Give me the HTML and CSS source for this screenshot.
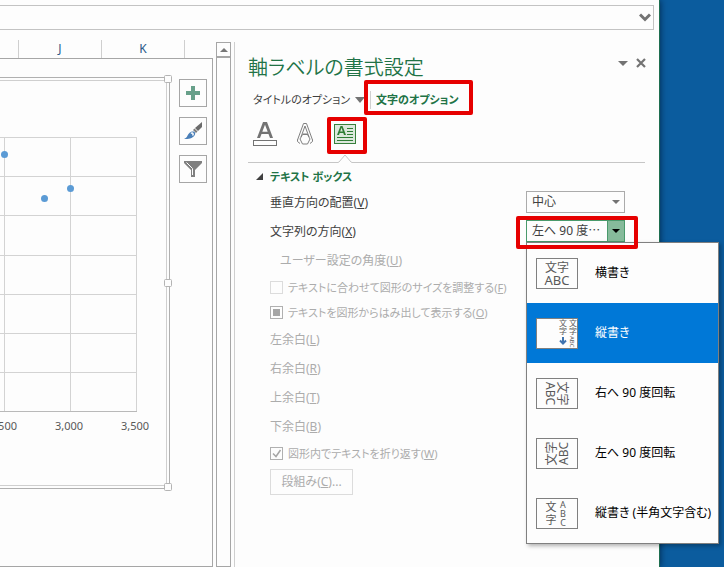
FILE: index.html
```html
<!DOCTYPE html>
<html lang="ja">
    <head>
        <meta charset="UTF-8">
        <title>軸ラベルの書式設定</title>
        <link rel="stylesheet" href="styles.css">
    </head>
    <body>
        <div class="window">
            <div class="formula-bar">
                <svg width="12" height="9" viewBox="0 0 12 9"><path d="M1 1.5 L6 6.5 L11 1.5" fill="none" stroke="#737373" stroke-width="3"/></svg>
            </div>
            <div class="main">
                <div class="sheet">
                    <div class="columns">
                        <span class="col first"></span>
                        <span class="col">J</span>
                        <span class="col">K</span>
                        <span class="col last"></span>
                    </div>
                    <div class="cells">
                        <svg class="chart" width="173" height="417" viewBox="0 75 173 417">
                            <g fill="none" shape-rendering="crispEdges">
                                <path d="M0 77.5H169.500V488.500H0" stroke="#b0b0b0"/>
                                <path d="M0 80.5H166.500V485.500H0" stroke="#cfcfcf"/>
                                <path d="M0 137.500H137M0 176.500H137M0 215.500H137M0 255.500H137M0 294.500H137M0 333.500H137M0 372.500H137M4.500 137V411M70.500 137V411M136.500 137V411" stroke="#d3d3d3"/>
                                <path d="M0 411.500H137" stroke="#b9b9b9"/>
                            </g>
                            <g fill="#fdfdfd" stroke="#b4b4b4">
                                <rect x="164.500" y="75.500" width="7" height="7" rx="1"/>
                                <rect x="164.500" y="279.500" width="7" height="7" rx="1"/>
                                <rect x="164.500" y="483.500" width="7" height="7" rx="1"/>
                            </g>
                            <g fill="#5b9bd5">
                                <circle cx="4.500" cy="154.500" r="3.500"/>
                                <circle cx="44.500" cy="198.500" r="3.500"/>
                                <circle cx="70.500" cy="188.500" r="3.500"/>
                            </g>
                            <g class="axis">
                                <text x="17" y="430" text-anchor="end">2,500</text>
                                <text x="69" y="430" text-anchor="middle">3,000</text>
                                <text x="135" y="430" text-anchor="middle">3,500</text>
                            </g>
                        </svg>
                        <div class="chart-tools">
                            <button type="button" aria-label="グラフ要素">
                                <svg width="14" height="14" viewBox="0 0 14 14"><path d="M5 0h4v5h5v4H9v5H5V9H0V5h5z" fill="#68a08a"/></svg>
                            </button>
                            <button type="button" aria-label="グラフ スタイル">
                                <svg width="18" height="18" viewBox="0 0 18 18">
                                    <path d="M18 0v5l-4 4-3-3z" fill="#6b6b6b"/>
                                    <path d="M10.500 6.500l3 3-1.500 1.500-3-3z" fill="#7c7c7c"/>
                                    <path d="M9 9.500c2 0 3 2 1.500 4-2 3-6 3.500-10.500 3.500 3-1 3-3 4.500-5 1.500-2 3-2.500 4.500-2.500z" fill="#4a7fb8"/>
                                    <path d="M7 11.500c1.500-1.500 3 .5 1.500 2" fill="none" stroke="#fdfdfd" stroke-width="1.500"/>
                                </svg>
                            </button>
                            <button type="button" aria-label="グラフ フィルター">
                                <svg width="18" height="16" viewBox="0 0 18 16">
                                    <path d="M0 0h18v2l-7 7v7H7V9L0 2z" fill="#808080"/>
                                    <path d="M2.500 1.500l6 6V14" fill="none" stroke="#fdfdfd"/>
                                </svg>
                            </button>
                        </div>
                    </div>
                </div>
                <div class="scrollbar">
                    <button type="button" aria-label="上へ">
                        <svg width="8" height="4" viewBox="0 0 8 4"><path d="M0 4L4 0l4 4z" fill="#777"/></svg>
                    </button>
                </div>
                <div class="pane">
                    <div class="pane-head">
                        <h1>軸ラベルの書式設定</h1>
                        <button type="button" aria-label="作業ウィンドウ オプション">
                            <svg width="10" height="5" viewBox="0 0 10 5"><path d="M0 0h10L5 5z" fill="#737373"/></svg>
                        </button>
                        <button type="button" aria-label="閉じる">
                            <svg width="10" height="10" viewBox="0 0 10 10"><path d="M1 1l8 8M9 1L1 9" stroke="#737373" stroke-width="2.200"/></svg>
                        </button>
                    </div>
                    <div class="tabs">
                        <button type="button" class="tab title-tab">タイトルのオプション
                            <svg width="10" height="6" viewBox="0 0 10 6"><path d="M0 0h10L5 6z" fill="#737373"/></svg>
                        </button>
                        <button type="button" class="tab text-tab">文字のオプション<span class="mark"></span></button>
                    </div>
                    <div class="icons">
                        <button type="button" aria-label="文字の塗りつぶしと輪郭">
                            <svg width="24" height="24" viewBox="0 0 24 24">
                                <path d="M4 16L10 0h4L20 16h-3l-1.500-4h-7L7 16zM9.300 9.700h5.400L12 2.800z" fill="#737373" fill-rule="evenodd"/>
                                <rect x=".5" y="18.500" width="23" height="5" fill="none" stroke="#737373"/>
                            </svg>
                        </button>
                        <button type="button" aria-label="文字の効果">
                            <svg width="18" height="24" viewBox="0 0 18 24" fill="none" stroke="#808080">
                                <path d="M1.500 18L7.500 1.500h3L16.500 18M5 15L9 4l4 11M7 12h4l2 2M4 21.500l-2.500-2v-2M14 21.500l2.500-2v-2"/>
                                <path d="M6.500 12.500h5L14 17l-2.500 5h-5L4 17z"/>
                            </svg>
                        </button>
                        <button type="button" class="current" aria-label="テキスト ボックス">
                            <svg width="22" height="20" viewBox="0 0 22 20">
                                <rect x=".5" y=".5" width="21" height="19" fill="#dce8dd" stroke="#38803c"/>
                                <path d="M3 11L6.500 2h2L12 11h-2l-.7-2H5.700L5 11zM6.200 7.400h2.600L7.500 3.800z" fill="#2f7d35" fill-rule="evenodd"/>
                                <path d="M13 4.500h6M13 7.500h6M13 10.500h6M3 13.500h16M3 16.500h16" stroke="#2f7d35"/>
                            </svg>
                            <span class="mark"></span>
                        </button>
                    </div>
                    <div class="divider">
                        <span class="before"></span>
                        <svg width="14" height="9" viewBox="0 0 14 9"><path d="M0 8.500L1 8 7 1l6 7 1 .5" fill="none" stroke="#c6c6c6"/></svg>
                        <span class="after"></span>
                    </div>
                    <h2><svg width="7" height="7" viewBox="0 0 7 7"><path d="M7 0v7H0z" fill="#404040"/></svg>テキスト ボックス</h2>
                    <form class="options">
                        <div class="row">
                            <label for="valign">垂直方向の配置(<u>V</u>)</label>
                            <span class="combo">
                                <select id="valign"><option>中心</option></select>
                                <svg width="8" height="4" viewBox="0 0 8 4"><path d="M0 0h8L4 4z" fill="#737373"/></svg>
                            </span>
                        </div>
                        <div class="row">
                            <label for="direction">文字列の方向(<u>X</u>)</label>
                            <span class="combo open">
                                <select id="direction"><option>左へ 90 度⋯</option></select>
                                <svg width="8" height="4" viewBox="0 0 8 4"><path d="M0 0h8L4 4z" fill="#000"/></svg>
                                <span class="mark"></span>
                                <span class="menu">
                                    <button type="button">
                                        <svg class="thumb" width="42" height="31" viewBox="0 0 42 31">
                                            <text x="21" y="14" font-size="12" text-anchor="middle">文字</text>
                                            <text x="21" y="27" font-size="13" text-anchor="middle">ABC</text>
                                        </svg>横書き
                                    </button>
                                    <button type="button" class="selected">
                                        <svg class="thumb" width="42" height="31" viewBox="0 0 42 31">
                                            <g font-size="8" text-anchor="middle">
                                                <text x="27" y="8">文</text><text x="27" y="16">字</text>
                                                <text x="37" y="8">文</text><text x="37" y="16">字</text>
                                            </g>
                                            <text transform="translate(34 18) rotate(90)" font-size="6">ABC</text>
                                            <path d="M27 19v6M24 22.500l3 3 3-3" fill="none" stroke="#3f74b0" stroke-width="2"/>
                                        </svg>縦書き
                                    </button>
                                    <button type="button">
                                        <svg class="thumb" width="42" height="31" viewBox="0 0 42 31">
                                            <g transform="translate(21 15.500) rotate(90)" text-anchor="middle">
                                                <text y="-1" font-size="12">文字</text>
                                                <text y="11" font-size="12">ABC</text>
                                            </g>
                                        </svg>右へ 90 度回転
                                    </button>
                                    <button type="button">
                                        <svg class="thumb" width="42" height="31" viewBox="0 0 42 31">
                                            <g transform="translate(21 15.500) rotate(-90)" text-anchor="middle">
                                                <text y="-1" font-size="12">文字</text>
                                                <text y="11" font-size="12">ABC</text>
                                            </g>
                                        </svg>左へ 90 度回転
                                    </button>
                                    <button type="button">
                                        <svg class="thumb" width="42" height="31" viewBox="0 0 42 31">
                                            <g font-size="11" text-anchor="middle"><text x="15" y="13">文</text><text x="15" y="26">字</text></g>
                                            <g font-size="9" text-anchor="middle"><text x="27" y="10">A</text><text x="27" y="19">B</text><text x="27" y="28">C</text></g>
                                        </svg>縦書き (半角文字含む)
                                    </button>
                                </span>
                            </span>
                        </div>
                        <div class="row off indent">
                            <label for="angle">ユーザー設定の角度(<u>U</u>)</label><input type="text" id="angle" disabled>
                        </div>
                        <div class="row off check">
                            <input type="checkbox" class="faint" id="fit" disabled><label for="fit">テキストに合わせて図形のサイズを調整する(<u>F</u>)</label>
                        </div>
                        <div class="row off check">
                            <input type="checkbox" class="mixed" id="overflow" disabled><label for="overflow">テキストを図形からはみ出して表示する(<u>O</u>)</label>
                        </div>
                        <div class="row off">
                            <label for="left">左余白(<u>L</u>)</label><input type="text" id="left" disabled>
                        </div>
                        <div class="row off">
                            <label for="right">右余白(<u>R</u>)</label><input type="text" id="right" disabled>
                        </div>
                        <div class="row off">
                            <label for="top">上余白(<u>T</u>)</label><input type="text" id="top" disabled>
                        </div>
                        <div class="row off">
                            <label for="bottom">下余白(<u>B</u>)</label><input type="text" id="bottom" disabled>
                        </div>
                        <div class="row off check">
                            <span class="tick">
                                <input type="checkbox" id="wrap" checked disabled>
                                <svg width="13" height="13" viewBox="0 0 13 13"><path d="M3 6.500l3 3L10.500 3" fill="none" stroke="#a6a6a6" stroke-width="1.500"/></svg>
                            </span>
                            <label for="wrap">図形内でテキストを折り返す(<u>W</u>)</label>
                        </div>
                        <button type="button" class="columns-button" disabled>段組み(<u>C</u>)...</button>
                    </form>
                </div>
            </div>
        </div>
    </body>
</html>
```
FILE: styles.css
```css
*{
    box-sizing: border-box;
}
html, body{
    height: 100%;
}
body{
    margin: 0;
    padding-right: 64px;
    overflow: hidden;
    background: #0b5c9e;
    font: 12px/18px "Noto Sans", "Noto Sans CJK JP", sans-serif;
    color: #404040;
}
button, select, input{
    margin: 0;
    padding: 0;
    border: 0;
    border-radius: 0;
    background: none;
    font: inherit;
    color: inherit;
}
svg{
    display: block;
    flex: none;
}
.window{
    display: flex;
    flex-direction: column;
    height: 100%;
    padding-top: 5px;
    background: #fdfdfd;
    border-right: 1px solid #1e6e50;
    box-shadow: 0 0 7px #002448;
}
.formula-bar{
    display: flex;
    flex: none;
    align-items: center;
    justify-content: flex-end;
    height: 25px;
    margin-right: 5px;
    padding-right: 2px;
    border: 1px solid #c3c3c3;
    border-left: 0;
}
.main{
    display: flex;
    flex: 1;
    min-height: 0;
    padding-top: 10px;
}

/* ワークシート */
.sheet{
    display: flex;
    flex-direction: column;
    flex: none;
    width: 213px;
}
.columns{
    display: flex;
    flex: none;
    height: 18px;
}
.col{
    width: 83px;
    border-right: 1px solid #cfcfcf;
    text-align: center;
    color: #2a5a88;
}
.first{
    width: 19px;
}
.last{
    flex: 1;
    border: 0;
}
.cells{
    display: flex;
    flex: 1;
    padding-top: 16px;
    border: 1px solid #a6a6a6;
    border-left: 0;
}
.axis{
    font-size: 11px;
    fill: #595959;
}
.chart-tools{
    display: flex;
    flex-direction: column;
    gap: 10px;
    padding: 4px 0 0 6px;
}
.chart-tools button{
    display: flex;
    align-items: center;
    justify-content: center;
    width: 28px;
    height: 28px;
    border: 1px solid #a6a6a6;
}
.scrollbar{
    flex: none;
    width: 15px;
    margin: 2px 3px 0;
    border: 1px solid #a6a6a6;
}
.scrollbar button{
    display: flex;
    align-items: center;
    justify-content: center;
    width: 100%;
    height: 15px;
    border-bottom: 2px solid #a6a6a6;
}

/* 作業ウィンドウ */
.pane{
    flex: 1;
    margin-top: 2px;
    padding: 8px 13px 0;
    border-left: 1px solid #cfcfcf;
    font-feature-settings: "palt";
}
.pane-head{
    display: flex;
    align-items: center;
    gap: 8px;
    height: 36px;
}
.pane-head h1{
    flex: 1;
    margin: 0;
    font-size: 20px;
    line-height: 36px;
    font-weight: 350;
    color: #217346;
}
.pane-head button{
    margin-bottom: 10px;
}
.mark{
    position: absolute;
    border: 4px solid #e60000;
    border-radius: 2px;
    pointer-events: none;
}
.tabs{
    display: flex;
    align-items: center;
    height: 28px;
    padding-left: 5px;
    font-size: 11px;
}
.tab{
    white-space: nowrap;
}
.title-tab{
    display: flex;
    align-items: center;
    gap: 5px;
    width: 117px;
}
.text-tab{
    position: relative;
    padding-left: 5px;
    border-left: 1px solid #d0d0d0;
    font-weight: bold;
    color: #217346;
}
.text-tab .mark{
    inset: -11px -14px -6px -7px;
}
.icons{
    display: flex;
    align-items: center;
    gap: 19px;
    height: 40px;
    padding-left: 5px;
}
.icons .current{
    position: relative;
    margin-left: 1px;
}
.current .mark{
    inset: -7px -11px -10px -7px;
}
.divider{
    display: flex;
    align-items: flex-end;
    margin-right: 1px;
}
.divider span{
    border-bottom: 1px solid #c6c6c6;
}
.before{
    width: 90px;
}
.after{
    flex: 1;
}
h2{
    display: flex;
    align-items: center;
    gap: 7px;
    height: 25px;
    margin: 0;
    padding: 2px 0 0 8px;
    font-size: 11px;
    color: #217346;
}
.options{
    padding: 0 21px 0 22px;
}
.row{
    display: flex;
    align-items: center;
    justify-content: space-between;
    height: 29px;
}
.off{
    color: #acacac;
}
.indent label{
    padding-left: 10px;
}
.check{
    justify-content: flex-start;
    gap: 5px;
    height: 25px;
    font-size: 11px;
}
.row input[type=text]{
    width: 99px;
    height: 22px;
    border: 1px solid #d9d9d9;
}
.row input[type=checkbox]{
    appearance: none;
    display: block;
    width: 13px;
    height: 13px;
    border: 1px solid #b0b0b0;
}
.row input.faint{
    border-color: #dcdcdc;
}
.row input.mixed{
    padding: 2px;
    background: #a6a6a6 content-box;
}
.tick{
    position: relative;
}
.tick svg{
    position: absolute;
    inset: 0;
}
.combo{
    position: relative;
    width: 99px;
    margin-bottom: 1px;
}
.combo select{
    appearance: none;
    display: block;
    width: 100%;
    height: 22px;
    padding-left: 5px;
    border: 1px solid #ababab;
}
.combo > svg{
    position: absolute;
    top: 9px;
    right: 5px;
    pointer-events: none;
}
.open select{
    border-color: #4a9a6c;
    background: linear-gradient(#4a9a6c, #4a9a6c) right 16px top / 1px 100% no-repeat,
        linear-gradient(#86bb9b, #86bb9b) right / 16px 100% no-repeat;
}
.open > .mark{
    inset: -4px -13px -7px -10px;
    z-index: 2;
}
.menu{
    position: absolute;
    top: 22px;
    left: 0;
    z-index: 1;
    width: 193px;
    background: #fdfdfd;
    border: 1px solid #808080;
    box-shadow: 2px 2px 4px rgba(0, 0, 0, .3);
    color: #000;
}
.menu button{
    display: flex;
    align-items: center;
    gap: 17px;
    width: 100%;
    height: 60px;
    padding-left: 9px;
    white-space: nowrap;
}
.menu .selected{
    background: #0078d7;
    color: #fff;
}
.thumb{
    background: #fdfdfd;
    outline: 1px solid #808080;
    outline-offset: -1px;
    fill: #595959;
}
.columns-button{
    display: block;
    width: 83px;
    height: 26px;
    margin-top: 3px;
    border: 1px solid #dcdcdc;
    color: #acacac;
}
```
